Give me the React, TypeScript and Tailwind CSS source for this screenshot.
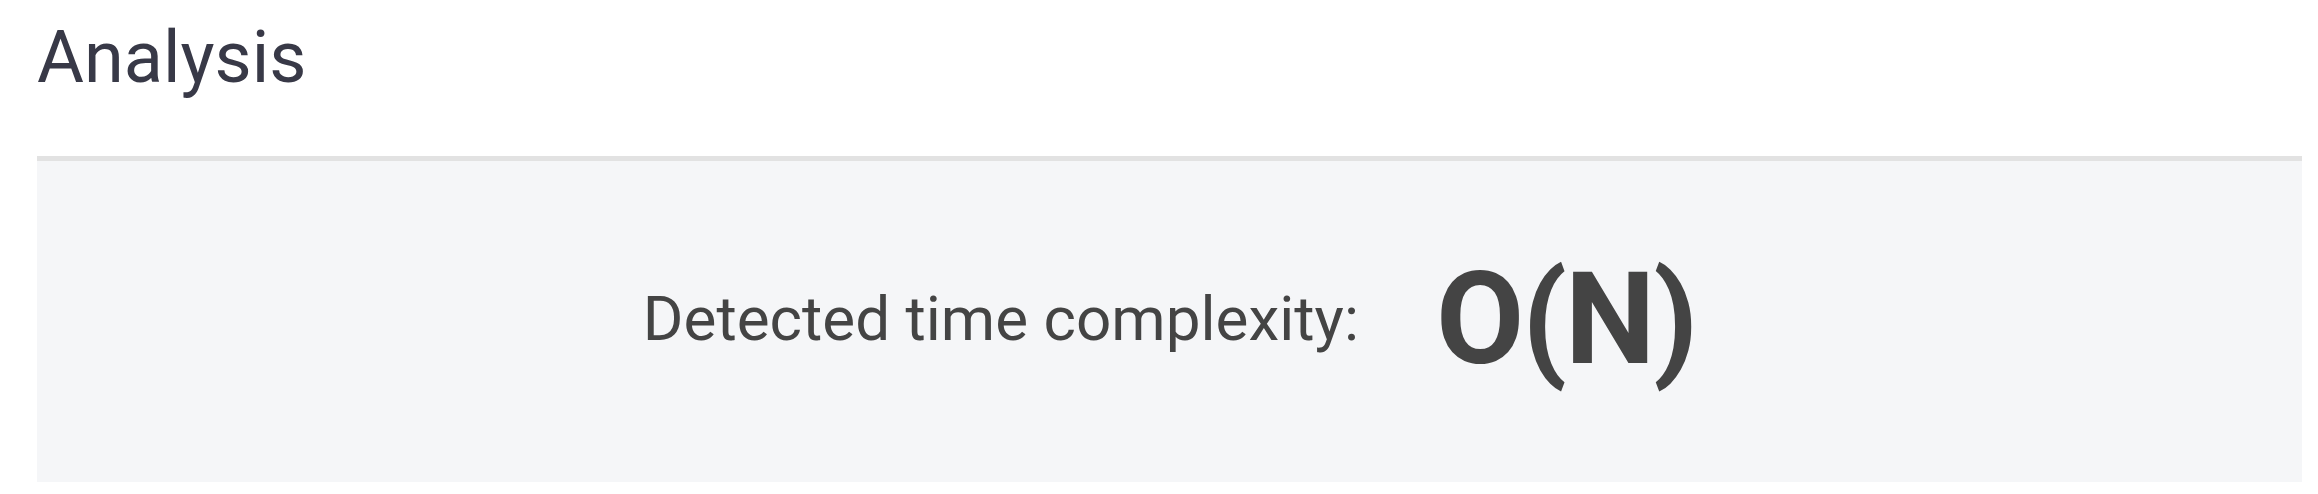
export default function App() {
  return (
    <div className="w-[2318px] h-[494px] bg-white pl-[37px] pr-[16px] pt-[22px]" style={{ fontFamily: 'Roboto, "Liberation Sans", sans-serif' }}>
      <h1 className="text-[72px] leading-none text-[#383947] font-normal">Analysis</h1>
      <div className="mt-[62px] h-[326px] border-t-[5px] border-[#e2e2e2] bg-[#f5f6f8] flex items-center justify-center">
        <div className="flex items-center gap-[77px] -mt-[5px]">
          <span className="text-[62px] leading-none text-[#444444]">Detected time complexity:</span>
          <span className="text-[128px] leading-none font-bold tracking-[-2px] text-[#444444]">O(N)</span>
        </div>
      </div>
    </div>
  );
}
